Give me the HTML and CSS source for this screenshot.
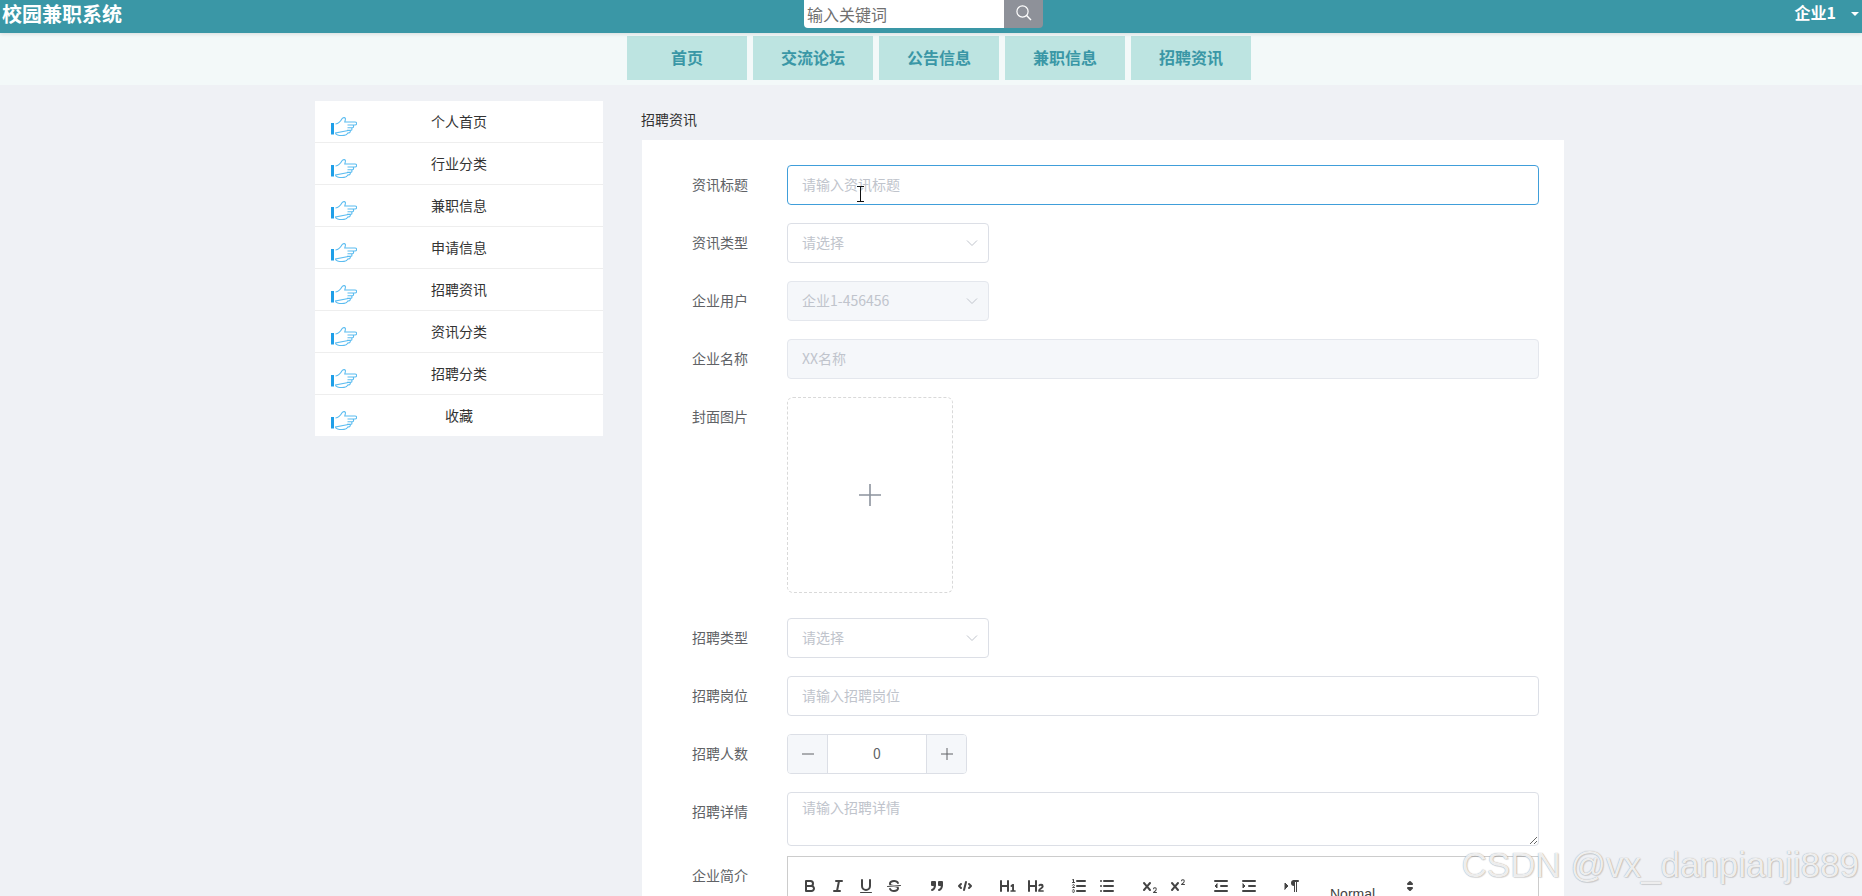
FILE: index.html
```html
<!DOCTYPE html>
<html lang="zh-CN">
<head>
<meta charset="utf-8">
<title>校园兼职系统</title>
<link rel="stylesheet" href="styles.css">
</head>
<body>
<svg class="defs" width="0" height="0" aria-hidden="true">
  <symbol id="hand" viewBox="0 0 26 19">
    <rect x="0" y="6" width="3" height="11.5" fill="#1f9fe8"/>
    <path d="M4.5 7C8 6.5 9.8 4 11 1.8C12 0 14.8 .2 14.4 2.4L13.8 5H24C26.2 5 26.2 8 24 8H16.5M21.5 8C23 8 23 10.7 21.5 10.7H16.5M20 10.7C21.3 10.7 21.3 13.3 20 13.3H16M18.6 13.3C19.6 13.3 19.6 15.8 18.2 15.9L16.8 16C16 18 14.5 18.6 11 18.6C8 18.6 4.5 18 4.5 16Z" fill="#fff" stroke="#5bbcf0" stroke-width="1.1"/>
  </symbol>
  <symbol id="chev" viewBox="0 0 12 8">
    <polyline points="1,1.5 6,6.5 11,1.5" fill="none" stroke="#c0c4cc" stroke-width="1"/>
  </symbol>
</svg>

<header class="topbar">
  <div class="brand">校园兼职系统</div>
  <div class="search">
    <input class="search-input" type="text" placeholder="输入关键词">
    <button class="search-btn" type="button" aria-label="搜索">
      <svg width="18" height="18" viewBox="0 0 18 18"><circle cx="7.5" cy="7.5" r="5.6" fill="none" stroke="#fff" stroke-width="1.2"/><line x1="11.6" y1="11.6" x2="16" y2="16" stroke="#fff" stroke-width="1.4"/></svg>
    </button>
  </div>
  <div class="user"><span>企业1</span><i class="caret"></i></div>
</header>

<nav class="mainnav">
  <a class="nav-item">首页</a>
  <a class="nav-item">交流论坛</a>
  <a class="nav-item">公告信息</a>
  <a class="nav-item">兼职信息</a>
  <a class="nav-item">招聘资讯</a>
</nav>

<main class="layout">
  <aside class="side">
    <div class="side-row"><svg class="hand"><use href="#hand"/></svg><span>个人首页</span></div>
    <div class="side-row"><svg class="hand"><use href="#hand"/></svg><span>行业分类</span></div>
    <div class="side-row"><svg class="hand"><use href="#hand"/></svg><span>兼职信息</span></div>
    <div class="side-row"><svg class="hand"><use href="#hand"/></svg><span>申请信息</span></div>
    <div class="side-row"><svg class="hand"><use href="#hand"/></svg><span>招聘资讯</span></div>
    <div class="side-row"><svg class="hand"><use href="#hand"/></svg><span>资讯分类</span></div>
    <div class="side-row"><svg class="hand"><use href="#hand"/></svg><span>招聘分类</span></div>
    <div class="side-row"><svg class="hand"><use href="#hand"/></svg><span>收藏</span></div>
  </aside>

  <section class="content">
    <div class="crumb">招聘资讯</div>
    <form class="card">
      <div class="row">
        <label class="lbl">资讯标题</label>
        <input class="field focus" type="text" placeholder="请输入资讯标题">
      </div>
      <div class="row">
        <label class="lbl">资讯类型</label>
        <div class="select"><span>请选择</span><svg class="chev"><use href="#chev"/></svg></div>
      </div>
      <div class="row">
        <label class="lbl">企业用户</label>
        <div class="select disabled"><span>企业1-456456</span><svg class="chev"><use href="#chev"/></svg></div>
      </div>
      <div class="row">
        <label class="lbl">企业名称</label>
        <input class="field disabled" type="text" placeholder="XX名称" disabled>
      </div>
      <div class="row row-upload">
        <label class="lbl">封面图片</label>
        <div class="upload">
          <svg width="22" height="22" viewBox="0 0 22 22"><path d="M11 0V22M0 11H22" stroke="#8c939d" stroke-width="1.6" fill="none"/></svg>
        </div>
      </div>
      <div class="row">
        <label class="lbl">招聘类型</label>
        <div class="select"><span>请选择</span><svg class="chev"><use href="#chev"/></svg></div>
      </div>
      <div class="row">
        <label class="lbl">招聘岗位</label>
        <input class="field" type="text" placeholder="请输入招聘岗位">
      </div>
      <div class="row">
        <label class="lbl">招聘人数</label>
        <div class="number">
          <span class="num-btn">
            <svg width="12" height="12" viewBox="0 0 12 12"><path d="M0 6H12" stroke="#606266" stroke-width="1"/></svg>
          </span>
          <span class="num-val">0</span>
          <span class="num-btn num-inc">
            <svg width="12" height="12" viewBox="0 0 12 12"><path d="M0 6H12M6 0V12" stroke="#606266" stroke-width="1"/></svg>
          </span>
        </div>
      </div>
      <div class="row row-text">
        <label class="lbl">招聘详情</label>
        <textarea class="area" placeholder="请输入招聘详情"></textarea>
      </div>
      <div class="row">
        <label class="lbl">企业简介</label>
        <div class="editor">
          <div class="toolbar">
            <span class="tgroup">
              <svg class="ql" viewBox="0 0 18 18"><path class="s" d="M5,4H9.5A2.5,2.5,0,0,1,12,6.5v0A2.5,2.5,0,0,1,9.5,9H5V4Z"/><path class="s" d="M5,9h5.5A2.5,2.5,0,0,1,13,11.5v0A2.5,2.5,0,0,1,10.5,14H5V9Z"/></svg>
              <svg class="ql" viewBox="0 0 18 18"><line class="s" x1="7" x2="13" y1="4" y2="4"/><line class="s" x1="5" x2="11" y1="14" y2="14"/><line class="s" x1="8" x2="10" y1="14" y2="4"/></svg>
              <svg class="ql" viewBox="0 0 18 18"><path class="s" d="M5,3V9a4.012,4.012,0,0,0,4,4H9a4.012,4.012,0,0,0,4-4V3"/><rect class="f" height="1" rx=".5" ry=".5" width="12" x="3" y="15"/></svg>
              <svg class="ql" viewBox="0 0 18 18"><line class="s t" x1="15.5" x2="2.5" y1="8.5" y2="9.5"/><path class="f" d="M9.007,8C6.542,7.791,6,7.519,6,6.5,6,5.792,7.283,5,9,5c1.571,0,2.765.679,2.969,1.309a1,1,0,0,0,1.9-.617C13.356,4.106,11.354,3,9,3,6.2,3,4,4.538,4,6.5a3.2,3.2,0,0,0,.5,1.843Z"/><path class="f" d="M8.984,10C11.457,10.208,12,10.479,12,11.5c0,.708-1.283,1.5-3,1.5-1.571,0-2.765-.679-2.969-1.309a1,1,0,1,0-1.9.617C4.644,13.894,6.646,15,9,15c2.8,0,5-1.538,5-3.5a3.2,3.2,0,0,0-.5-1.843Z"/></svg>
            </span>
            <span class="tgroup">
              <svg class="ql" viewBox="0 0 18 18"><rect class="f s" height="3" width="3" x="4" y="5"/><rect class="f s" height="3" width="3" x="11" y="5"/><path class="s" d="M7,8c0,4.031-3,5-3,5"/><path class="s" d="M14,8c0,4.031-3,5-3,5"/></svg>
              <svg class="ql" viewBox="0 0 18 18"><polyline class="s" points="5 7 3 9 5 11"/><polyline class="s" points="13 7 15 9 13 11"/><line class="s" x1="10" x2="8" y1="5" y2="13"/></svg>
            </span>
            <span class="tgroup">
              <svg class="ql" viewBox="0 0 18 18"><path class="f" d="M10,4V14a1,1,0,0,1-2,0V10H3v4a1,1,0,0,1-2,0V4A1,1,0,0,1,3,4V8H8V4a1,1,0,0,1,2,0Zm6.06787,9.209H14.98975V7.59863a.54085.54085,0,0,0-.605-.60547h-.62744a1.01119,1.01119,0,0,0-.748.29688L11.645,8.56641a.5435.5435,0,0,0-.022.8584l.28613.30762a.53861.53861,0,0,0,.84717.0332l.09912-.08789a1.2137,1.2137,0,0,0,.2417-.35254h.02246s-.01123.30859-.01123.60547V13.209H12.041a.54085.54085,0,0,0-.605.60547v.43945a.54085.54085,0,0,0,.605.60547h4.02686a.54085.54085,0,0,0,.605-.60547v-.43945A.54085.54085,0,0,0,16.06787,13.209Z"/></svg>
              <svg class="ql" viewBox="0 0 18 18"><path class="f" d="M16.73975,13.81445v.43945a.54085.54085,0,0,1-.605.60547H11.855a.58392.58392,0,0,1-.64893-.60547V14.0127c0-2.90527,3.39941-3.42187,3.39941-4.55469a.77675.77675,0,0,0-.84717-.78125,1.17684,1.17684,0,0,0-.83594.38477c-.2749.26367-.561.374-.85791.13184l-.4292-.34082c-.30811-.24219-.38525-.51758-.1543-.81445a2.97155,2.97155,0,0,1,2.45361-1.17676,2.45393,2.45393,0,0,1,2.68408,2.40918c0,2.45312-3.1792,2.92676-3.27832,3.93848h2.79443A.54085.54085,0,0,1,16.73975,13.81445ZM9,3A.99974.99974,0,0,0,8,4V8H3V4A1,1,0,0,0,1,4V14a1,1,0,0,0,2,0V10H8v4a1,1,0,0,0,2,0V4A.99974.99974,0,0,0,9,3Z"/></svg>
            </span>
            <span class="tgroup">
              <svg class="ql" viewBox="0 0 18 18"><line class="s" x1="7" x2="15" y1="4" y2="4"/><line class="s" x1="7" x2="15" y1="9" y2="9"/><line class="s" x1="7" x2="15" y1="14" y2="14"/><line class="s t" x1="2.5" x2="4.5" y1="5.5" y2="5.5"/><path class="f" d="M3.5,6A0.5,0.5,0,0,1,3,5.5V3.085l-0.276.138A0.5,0.5,0,0,1,2.053,3c-0.124-.247-0.023-0.324.224-0.447l1-.5A0.5,0.5,0,0,1,4,2.5v3A0.5,0.5,0,0,1,3.5,6Z"/><path class="s t" d="M4.5,10.5h-2c0-.234,1.85-1.076,1.85-2.234A0.959,0.959,0,0,0,2.5,8.156"/><path class="s t" d="M2.5,14.846a0.959,0.959,0,0,0,1.85-.109A0.7,0.7,0,0,0,3.75,14a0.688,0.688,0,0,0,.6-0.736,0.959,0.959,0,0,0-1.85-.109"/></svg>
              <svg class="ql" viewBox="0 0 18 18"><line class="s" x1="6" x2="15" y1="4" y2="4"/><line class="s" x1="6" x2="15" y1="9" y2="9"/><line class="s" x1="6" x2="15" y1="14" y2="14"/><line class="s" x1="3" x2="3" y1="4" y2="4"/><line class="s" x1="3" x2="3" y1="9" y2="9"/><line class="s" x1="3" x2="3" y1="14" y2="14"/></svg>
            </span>
            <span class="tgroup">
              <svg class="ql" viewBox="0 0 18 18"><path class="f" d="M15.5,15H13.861a3.858,3.858,0,0,0,1.914-2.975,1.8,1.8,0,0,0-1.6-1.751A1.921,1.921,0,0,0,12.021,11.7a0.50013,0.50013,0,1,0,.957.291h0a0.914,0.914,0,0,1,1.053-.725,0.81,0.81,0,0,1,.744.762c0,1.076-1.16971,1.86982-1.93971,2.43082A1.45639,1.45639,0,0,0,12,15.5a0.5,0.5,0,0,0,.5.5h3A0.5,0.5,0,0,0,15.5,15Z"/><path class="f" d="M9.65,5.241a1,1,0,0,0-1.409.108L6,7.964,3.759,5.349A1,1,0,0,0,2.192,6.59178Q2.21541,6.6213,2.241,6.651L4.684,9.5,2.241,12.35A1,1,0,0,0,3.71,13.70722q0.02557-.02768.049-0.05722L6,11.036,8.241,13.65a1,1,0,1,0,1.567-1.24277Q9.78459,12.3777,9.759,12.35L7.316,9.5,9.759,6.651A1,1,0,0,0,9.65,5.241Z"/></svg>
              <svg class="ql" viewBox="0 0 18 18"><path class="f" d="M15.5,7H13.861a4.015,4.015,0,0,0,1.914-2.975,1.8,1.8,0,0,0-1.6-1.751A1.922,1.922,0,0,0,12.021,3.7a0.5,0.5,0,1,0,.957.291,0.917,0.917,0,0,1,1.053-.725,0.81,0.81,0,0,1,.744.762c0,1.077-1.164,1.925-1.934,2.486A1.423,1.423,0,0,0,12,7.5a0.5,0.5,0,0,0,.5.5h3A0.5,0.5,0,0,0,15.5,7Z"/><path class="f" d="M9.651,5.241a1,1,0,0,0-1.41.108L6,7.964,3.759,5.349a1,1,0,1,0-1.519,1.3L4.683,9.5,2.241,12.35a1,1,0,1,0,1.519,1.3L6,11.036l2.241,2.614a1,1,0,0,0,1.519-1.3L7.317,9.5,9.759,6.651A1,1,0,0,0,9.651,5.241Z"/></svg>
            </span>
            <span class="tgroup">
              <svg class="ql" viewBox="0 0 18 18"><line class="s" x1="3" x2="15" y1="14" y2="14"/><line class="s" x1="3" x2="15" y1="4" y2="4"/><line class="s" x1="9" x2="15" y1="9" y2="9"/><polyline class="f s t" points="5 7 5 11 3 9 5 7"/></svg>
              <svg class="ql" viewBox="0 0 18 18"><line class="s" x1="3" x2="15" y1="14" y2="14"/><line class="s" x1="3" x2="15" y1="4" y2="4"/><line class="s" x1="9" x2="15" y1="9" y2="9"/><polyline class="f s t" points="3 7 3 11 5 9 3 7"/></svg>
            </span>
            <span class="tgroup">
              <svg class="ql" viewBox="0 0 18 18"><polygon class="f s t" points="2 12 5 9 2 6 2 12"/><line class="s" x1="15" x2="11" y1="4" y2="4"/><path class="f" d="M11,3a3,3,0,0,0,0,6h1V3H11Z"/><rect class="f" height="11" width="1" x="11" y="4"/><rect class="f" height="11" width="1" x="13" y="4"/></svg>
            </span>
            <span class="picker">
              <span class="picker-label">Normal</span>
              <svg class="picker-arrows" viewBox="0 0 18 18"><polygon class="f s" points="7 11 9 13 11 11 7 11"/><polygon class="f s" points="7 7 9 5 11 7 7 7"/></svg>
            </span>
          </div>
        </div>
      </div>
    </form>
  </section>
</main>

<svg class="ibeam" width="9" height="16" viewBox="0 0 9 16"><path d="M1 .5H8M1 15.5H8M4.5 .5V15.5" stroke="#111" stroke-width="1" fill="none"/></svg>
<div class="watermark">CSDN @vx_danpianji889</div>
</body>
</html>
```
FILE: styles.css
```css
* { box-sizing: border-box; }
html, body { margin: 0; height: 100%; overflow: hidden; }
body {
  position: relative;
  background: #eff1f5;
  font-family: "Noto Sans CJK SC", "Liberation Sans", sans-serif;
  font-size: 14px;
  color: #303133;
}
.defs { position: absolute; }

.topbar {
  height: 33px;
  background: #3a97a6;
  display: flex;
  align-items: flex-start;
  color: #fff;
  position: relative;
  z-index: 1;
  box-shadow: 0 1px 4px rgba(0, 0, 0, .12);
}
.brand {
  flex: 0 0 804px;
  padding-left: 2px;
  font-size: 20px;
  font-weight: 700;
  line-height: 28px;
}
.search { display: flex; height: 28px; }
.search-input {
  width: 200px;
  height: 28px;
  border: 0;
  outline: 0;
  padding: 0 0 0 3px;
  font: 16px "Noto Sans CJK SC", sans-serif;
  background: #fff;
  border-radius: 0 0 0 4px;
}
.search-input::placeholder { color: #707070; opacity: 1; }
.search-btn {
  width: 39px;
  height: 28px;
  border: 0;
  padding: 0 0 2px;
  background: #8e9199;
  border-radius: 0 0 4px 0;
  display: flex;
  align-items: center;
  justify-content: center;
}
.user {
  margin-left: auto;
  display: flex;
  align-items: center;
  height: 24px;
  padding-right: 3px;
  font-size: 16px;
  font-weight: 700;
}
.caret {
  width: 0;
  height: 0;
  margin: 3px 0 0 15px;
  border-left: 4px solid transparent;
  border-right: 4px solid transparent;
  border-top: 4px solid #fff;
}

.mainnav {
  height: 52px;
  background: #f3f9f9;
  display: flex;
  gap: 6px;
  padding: 3px 0 0 627px;
}
.nav-item {
  width: 120px;
  height: 44px;
  background: #bde4e1;
  color: #3a97a6;
  font-size: 16px;
  font-weight: 700;
  line-height: 42px;
  text-align: center;
}

.layout {
  display: flex;
  align-items: flex-start;
  padding: 16px 0 0 315px;
}
.side { width: 288px; background: #fff; flex: none; }
.side-row {
  height: 42px;
  display: grid;
  grid-template-columns: 1fr auto 1fr;
  border-bottom: 1px solid #eeeeee;
  line-height: 40px;
  color: #333;
}
.side-row:last-child { border-bottom: 0; height: 41px; }
.hand { width: 26px; height: 19px; margin: 16px 0 0 16px; }

.content { margin-left: 38px; width: 923px; }
.crumb { height: 39px; line-height: 36px; color: #333; }
.card {
  margin-left: 1px;
  width: 922px;
  background: #fff;
  padding: 25px 25px 0 0;
}
.row { display: flex; align-items: flex-start; margin-bottom: 18px; }
.lbl {
  flex: 0 0 145px;
  padding-right: 39px;
  line-height: 38px;
  text-align: right;
  color: #606266;
}
.field, .select, .area {
  border: 1px solid #dcdfe6;
  border-radius: 4px;
  background: #fff;
  font: 14px "Noto Sans CJK SC", sans-serif;
  color: #606266;
}
.field { flex: 1; height: 40px; padding: 0 14px 2px; outline: 0; }
.field::placeholder, .area::placeholder { color: #c0c4cc; opacity: 1; }
.field.focus { border-color: #409eda; }
.field.disabled { background: #f5f7fa; border-color: #e4e7ed; }
.select {
  width: 202px;
  height: 40px;
  padding: 0 9px 2px 14px;
  display: flex;
  align-items: center;
  justify-content: space-between;
  color: #c0c4cc;
}
.select.disabled { background: #f5f7fa; border-color: #e4e7ed; }
.chev { width: 12px; height: 8px; margin: 2px 1px 0 0; }

.upload {
  width: 166px;
  height: 196px;
  border: 1px dashed #d9d9d9;
  border-radius: 6px;
  display: flex;
  align-items: center;
  justify-content: center;
}
.row-upload { margin-bottom: 25px; }

.number {
  width: 180px;
  height: 40px;
  border: 1px solid #dcdfe6;
  border-radius: 4px;
  display: flex;
  overflow: hidden;
}
.num-btn {
  flex: 0 0 40px;
  background: #f5f7fa;
  border-right: 1px solid #dcdfe6;
  display: flex;
  align-items: center;
  justify-content: center;
}
.num-inc { border-right: 0; border-left: 1px solid #dcdfe6; }
.num-val { flex: 1; text-align: center; line-height: 36px; color: #606266; }

.row-text { margin-bottom: 10px; }
.area {
  flex: 1;
  height: 54px;
  padding: 4px 14px;
  line-height: 1.5;
  resize: vertical;
  outline: 0;
  display: block;
}
.editor { flex: 1; border: 1px solid #ccc; height: 200px; }
.toolbar {
  display: flex;
  align-items: flex-start;
  gap: 15px;
  padding: 17px 8px 8px;
}
.tgroup { display: flex; }
.ql { width: 28px; height: 24px; padding: 3px 5px; }
.s { fill: none; stroke: #444; stroke-width: 2; stroke-linecap: round; stroke-linejoin: round; }
.t { stroke-width: 1; }
.f { fill: #444; }
.s.f { fill: #444; }
.picker {
  width: 98px;
  display: flex;
  justify-content: space-between;
  padding-left: 9px;
  font: 14px "Liberation Sans", sans-serif;
  color: #444;
}
.picker-label { margin-top: 12px; line-height: 16px; }
.picker-arrows { width: 18px; height: 18px; margin-top: 3px; }

.ibeam { position: absolute; left: 856px; top: 186px; }
.watermark {
  position: absolute;
  right: 3px;
  bottom: 11px;
  font: 35px "Liberation Sans", sans-serif;
  color: rgba(255, 255, 255, .85);
  text-shadow: 0 0 1px rgba(120, 120, 120, .8), 1px 1px 1px rgba(0, 0, 0, .12);
  white-space: nowrap;
}
```
